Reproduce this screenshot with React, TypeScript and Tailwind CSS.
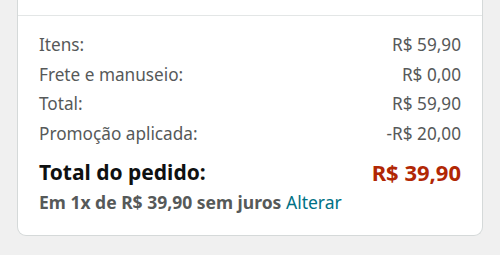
export default function App() {
  const rows = [
    { label: "Itens:", value: "R$ 59,90" },
    { label: "Frete e manuseio:", value: "R$ 0,00" },
    { label: "Total:", value: "R$ 59,90" },
    { label: "Promoção aplicada:", value: "-R$ 20,00" },
  ];

  return (
    <div className="h-[255px] w-[500px] bg-[#f0f0f0] px-[17px] font-['Noto_Sans',sans-serif] overflow-hidden">
      <div className="bg-white border-x border-b border-[#d5d9d9] rounded-b-[9px]">
        <div className="h-[16px] border-b border-[#e3e6e6]" />
        <div className="px-[21px] pt-[14px] pb-[17px]">
          {rows.map((row) => (
            <div
              key={row.label}
              className="flex justify-between text-[17.2px] leading-[29.5px] text-[#565959]"
            >
              <span>{row.label}</span>
              <span>{row.value}</span>
            </div>
          ))}
          <div className="flex justify-between mt-[9px] text-[21px] leading-[30px] font-bold">
            <span className="text-[#0f1111]">Total do pedido:</span>
            <span className="text-[#b12704] text-[22px]">R$ 39,90</span>
          </div>
          <p className="text-[17.5px] leading-[31px] text-[#565959]">
            <span className="font-bold">Em 1x de R$ 39,90 sem juros</span>{" "}
            <span className="text-[#007185]">Alterar</span>
          </p>
        </div>
      </div>
    </div>
  );
}
